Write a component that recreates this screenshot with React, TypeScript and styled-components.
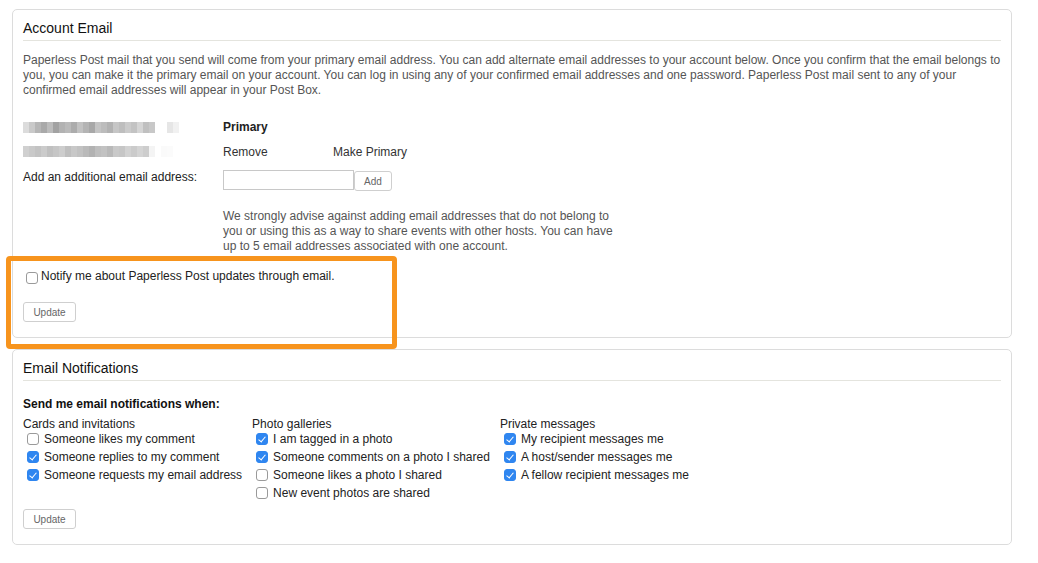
import React from "react"
import styled, { createGlobalStyle } from "styled-components"

const GlobalStyle = createGlobalStyle`
  html, body {
    margin: 0;
    padding: 0;
    background: #fff;
  }
  body {
    font-family: "Liberation Sans", Arial, Helvetica, sans-serif;
    font-size: 12px;
    color: #222;
  }
  * {
    box-sizing: border-box;
  }
`

const Page = styled.div`
  padding: 9px 0 0 12px;
  display: flex;
  flex-direction: column;
  gap: 11px;
`

const Card = styled.section`
  width: 1000px;
  border: 1px solid #dcdcdc;
  border-radius: 5px;
  padding: 9px 10px 15px 10px;
`

const CardTitle = styled.h2`
  margin: 0;
  font-size: 14px;
  font-weight: normal;
  line-height: 18px;
  color: #111;
  padding-bottom: 3px;
  border-bottom: 1px solid #e4e4de;
`

const Intro = styled.p`
  margin: 12px 0 0;
  line-height: 15px;
  color: #555;
`

const EmailGrid = styled.div`
  margin-top: 17px;
  display: grid;
  grid-template-columns: 200px 1fr;
`

const Cell = styled.div<{ $h: number; $pad?: number; $top?: boolean }>`
  height: ${(p) => p.$h}px;
  padding-top: ${(p) => p.$pad ?? 0}px;
  display: flex;
  align-items: ${(p) => (p.$top ? "flex-start" : "center")};
  line-height: 15px;
  color: #222;
`

const Strong = styled.span`
  font-weight: bold;
`

const Action = styled.span<{ $w?: number }>`
  display: inline-block;
  width: ${(p) => (p.$w ? `${p.$w}px` : "auto")};
  color: #333;
`

const Blur = styled.div`
  display: flex;
  height: 11px;
`

const BlurBlock = styled.span<{ $c: string }>`
  width: 6px;
  height: 100%;
  background: ${(p) => p.$c};
`

const TextInput = styled.input`
  width: 131px;
  height: 20px;
  border: 1px solid #c8c8c8;
  margin: 0;
  padding: 0 4px;
  font: inherit;
`

const SmallButton = styled.button<{ $w: number }>`
  width: ${(p) => p.$w}px;
  height: 20px;
  margin: 0;
  padding: 0;
  border: 1px solid #cfcfcf;
  border-radius: 3px;
  background: #fff;
  color: #666;
  font-family: "Liberation Sans", Arial, sans-serif;
  font-size: 10px;
`

const AddButton = styled(SmallButton)`
  margin-top: 1px;
`

const Warning = styled.p`
  margin: 19px 0 0 200px;
  width: 395px;
  line-height: 15px;
  color: #555;
`

const NotifySection = styled.div`
  position: relative;
  margin-top: 14px;
`

const Highlight = styled.div`
  position: absolute;
  left: -17px;
  top: -12px;
  width: 391px;
  height: 93px;
  border: 5px solid #f7941d;
  border-radius: 4px;
  pointer-events: none;
`

const CheckRow = styled.label<{ $h: number }>`
  display: flex;
  align-items: center;
  height: ${(p) => p.$h}px;
  line-height: 15px;
  color: #222;
  white-space: nowrap;
`

const Box = styled.input<{ $drop?: number; $side?: number }>`
  appearance: none;
  position: relative;
  width: 12px;
  height: 12px;
  margin: ${(p) => p.$drop ?? 0}px ${(p) => p.$side ?? 5}px 0 ${(p) => (p.$side ? p.$side : 4)}px;
  border: 1px solid #9a9a9a;
  border-radius: 3px;
  background: #fff;
  flex: none;

  &:checked {
    background: #2f86f0;
    border-color: #2f86f0;
  }

  &:checked::after {
    content: "";
    position: absolute;
    left: 3px;
    top: 1px;
    width: 3px;
    height: 6px;
    border: solid #fff;
    border-width: 0 1.5px 1.5px 0;
    transform: rotate(40deg);
  }
`

const UpdateButton = styled(SmallButton)`
  display: block;
  margin-top: 18px;
`

const Lead = styled.div`
  margin-top: 16px;
  font-weight: bold;
  line-height: 15px;
  color: #111;
`

const Columns = styled.div`
  margin-top: 5px;
  display: flex;
  gap: 10px;
`

const Column = styled.div`
  display: flex;
  flex-direction: column;
`

const ColumnHead = styled.div`
  height: 13px;
  line-height: 15px;
  color: #222;
`

const NotifUpdate = styled(SmallButton)`
  display: block;
  margin-top: 7px;
`

const blur1 = ["#dcdcdc", "#c9c9c9", "#b6b6b6", "#a9a9a9", "#bcbcbc", "#a2a2a2", "#b2b2b2", "#bababa", "#acacac", "#c2c2c2", "#b4b4b4", "#a8a8a8", "#c4c4c4", "#bcbcbc", "#b2b2b2", "#c6c6c6", "#bebebe", "#cbcbcb", "#c3c3c3", "#d5d5d5", "#c0c0c0", "#c8c8c8", "#ffffff", "#ffffff", "#e6e6e6", "#f1f1f1"]
const blur2 = ["#d0d0d0", "#c9c9c9", "#c3c3c3", "#cbcbcb", "#c0c0c0", "#c6c6c6", "#cdcdcd", "#bfbfbf", "#c8c8c8", "#c2c2c2", "#bababa", "#b2b2b2", "#bebebe", "#c2c2c2", "#b9b9b9", "#c9c9c9", "#c6c6c6", "#d2d2d2", "#cbcbcb", "#d4d4d4", "#cdcdcd", "#f4f4f4", "#ffffff", "#fafafa", "#fbfbfb"]

const groups = [
  {
    title: "Cards and invitations",
    items: [
      { label: "Someone likes my comment", on: false },
      { label: "Someone replies to my comment", on: true },
      { label: "Someone requests my email address", on: true },
    ],
  },
  {
    title: "Photo galleries",
    items: [
      { label: "I am tagged in a photo", on: true },
      { label: "Someone comments on a photo I shared", on: true },
      { label: "Someone likes a photo I shared", on: false },
      { label: "New event photos are shared", on: false },
    ],
  },
  {
    title: "Private messages",
    items: [
      { label: "My recipient messages me", on: true },
      { label: "A host/sender messages me", on: true },
      { label: "A fellow recipient messages me", on: true },
    ],
  },
]

function BlurredEmail({ shades }: { shades: string[] }) {
  return (
    <Blur>
      {shades.map((c, i) => (
        <BlurBlock key={i} $c={c} />
      ))}
    </Blur>
  )
}

export default function App() {
  return (
    <Page>
      <GlobalStyle />
      <Card>
        <CardTitle>Account Email</CardTitle>
        <Intro>
          Paperless Post mail that you send will come from your primary email address. You can add alternate email
          addresses to your account below. Once you confirm that the email belongs to you, you can make it the primary
          email on your account. You can log in using any of your confirmed email addresses and one password. Paperless
          Post mail sent to any of your confirmed email addresses will appear in your Post Box.
        </Intro>

        <EmailGrid>
          <Cell $h={24}>
            <BlurredEmail shades={blur1} />
          </Cell>
          <Cell $h={24}>
            <Strong>Primary</Strong>
          </Cell>
          <Cell $h={24} $pad={1}>
            <BlurredEmail shades={blur2} />
          </Cell>
          <Cell $h={24} $pad={2}>
            <Action $w={110}>Remove</Action>
            <Action>Make Primary</Action>
          </Cell>
          <Cell $h={27} $pad={7} $top>
            Add an additional email address:
          </Cell>
          <Cell $h={27} $pad={7} $top>
            <TextInput type="text" />
            <AddButton $w={38}>Add</AddButton>
          </Cell>
        </EmailGrid>

        <Warning>
          We strongly advise against adding email addresses that do not belong to you or using this as a way to share
          events with other hosts. You can have up to 5 email addresses associated with one account.
        </Warning>

        <NotifySection>
          <Highlight />
          <CheckRow $h={16}>
            <Box type="checkbox" $drop={3} $side={3} />
            Notify me about Paperless Post updates through email.
          </CheckRow>
          <UpdateButton $w={53}>Update</UpdateButton>
        </NotifySection>
      </Card>

      <Card>
        <CardTitle>Email Notifications</CardTitle>
        <Lead>Send me email notifications when:</Lead>
        <Columns>
          {groups.map((g) => (
            <Column key={g.title}>
              <ColumnHead>{g.title}</ColumnHead>
              {g.items.map((it) => (
                <CheckRow key={it.label} $h={18}>
                  <Box type="checkbox" defaultChecked={it.on} />
                  {it.label}
                </CheckRow>
              ))}
            </Column>
          ))}
        </Columns>
        <NotifUpdate $w={53}>Update</NotifUpdate>
      </Card>
    </Page>
  )
}
